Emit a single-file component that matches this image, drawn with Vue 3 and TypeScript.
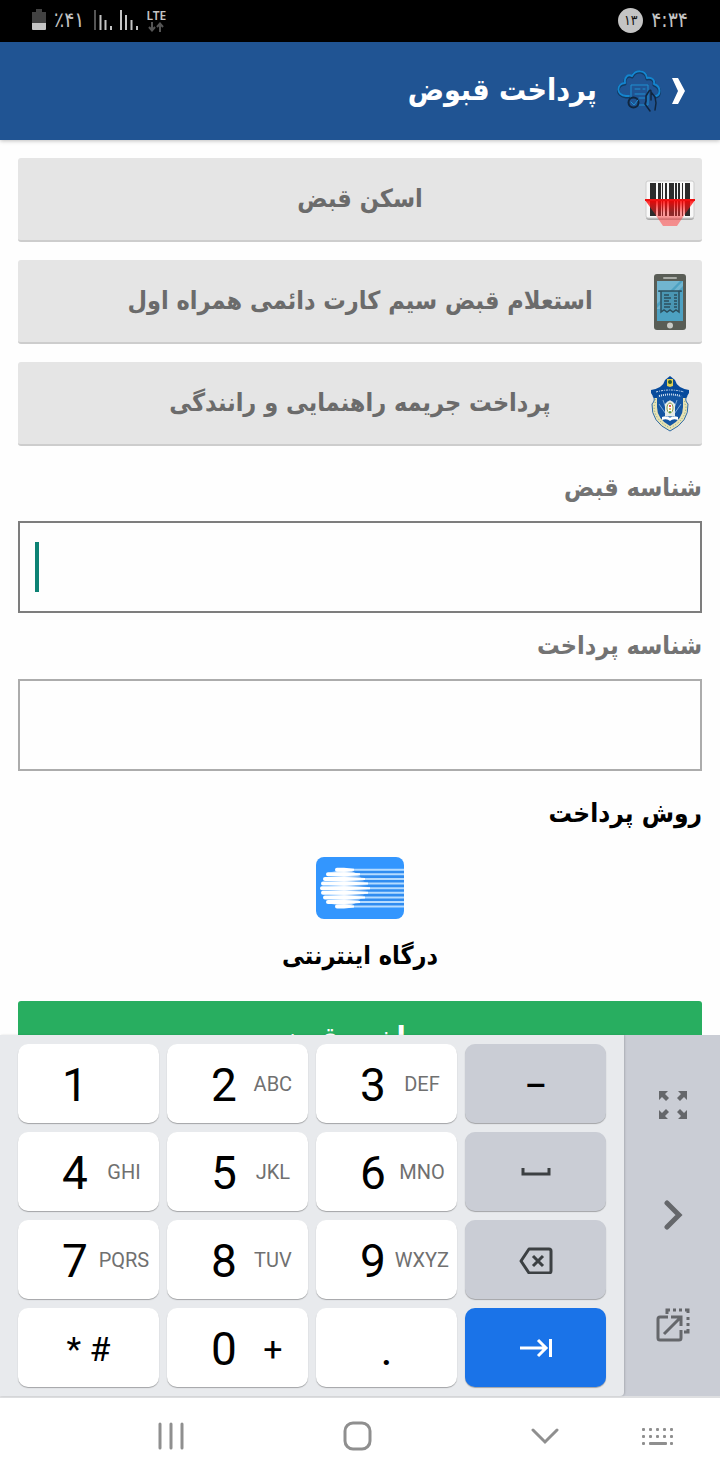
<script setup lang="ts">
import { ref } from 'vue'

interface Key {
  main: string
  sub?: string
}

const billId = ref('')
const paymentId = ref('')

const rows: { keys: Key[]; action: string; label: string }[] = [
  { keys: [{ main: '1' }, { main: '2', sub: 'ABC' }, { main: '3', sub: 'DEF' }], action: 'dash', label: 'Dash' },
  { keys: [{ main: '4', sub: 'GHI' }, { main: '5', sub: 'JKL' }, { main: '6', sub: 'MNO' }], action: 'space', label: 'Space' },
  { keys: [{ main: '7', sub: 'PQRS' }, { main: '8', sub: 'TUV' }, { main: '9', sub: 'WXYZ' }], action: 'delete', label: 'Delete' },
  { keys: [{ main: '* #' }, { main: '0', sub: '+' }, { main: '.' }], action: 'next', label: 'Next' },
]

const keyClass = (k: Key) => ({
  'key-symbols': k.main === '* #',
  'key-dot': k.main === '.',
  'key-plus': k.sub === '+',
})

const cols = [0, 1, 2, 3, 4]
const stripes = [
  { y: 12.7, x: 19, end: 38 },
  { y: 17.3, x: 10, end: 44 },
  { y: 22, x: 7, end: 49 },
  { y: 26.6, x: 5, end: 52 },
  { y: 31.2, x: 4, end: 54 },
  { y: 35.8, x: 5, end: 52 },
  { y: 40.4, x: 7, end: 49 },
  { y: 45, x: 10, end: 44 },
  { y: 49.6, x: 19, end: 38 },
]
</script>

<template>
  <div class="screen" dir="rtl">
    <div class="status" dir="ltr">
      <div class="status-group">
        <svg width="14" height="22" viewBox="0 0 14 22" aria-hidden="true">
          <path d="M4 0h6v3h4v11H0V3h4z" fill="#424242" />
          <path d="M0 14h14v6q0 1-1 1H1q-1 0-1-1z" fill="#c4c4c4" />
        </svg>
        <span class="battery">٪۴۱</span>
        <svg width="46" height="22" viewBox="0 0 46 22" aria-hidden="true">
          <path d="M3 1v20" stroke="#555" stroke-width="2" />
          <path d="M8.500 6v15M13.500 11v10M19 17v4M29 1v20M34 6v15M39.500 11v10M45 17v4" stroke="#c4c4c4" stroke-width="2" />
        </svg>
        <span class="lte">
          <span>LTE</span>
          <svg width="16" height="10" viewBox="0 0 16 10" aria-hidden="true">
            <path d="M4 0v8M1 5l3 3.500L7 5M12 10V2M9 5l3-3.500L15 5" fill="none" stroke="#555" stroke-width="2" />
          </svg>
        </span>
      </div>
      <div class="status-group">
        <span class="count">۱۳</span>
        <span class="clock">۴:۳۴</span>
      </div>
    </div>

    <header class="header">
      <button class="back" type="button" aria-label="بازگشت">
        <svg width="15" height="26" viewBox="0 0 15 26"><path d="M1 0h6l7 13-7 13H1l6-13z" fill="#fff" /></svg>
      </button>
      <svg class="cloud" width="44" height="42" viewBox="0 0 44 42" aria-hidden="true">
        <g fill="none" stroke-linejoin="round" stroke-linecap="round">
          <path d="M12 27H9C-1 26-1 15 8 14 7 8 11 5 15 7 19-1 29 1 30 9c5-1 8 2 7 6 8 3 6 11 2 12" stroke="#123a63" stroke-width="3" />
          <path d="M12 26H9C-1 25-1 14 8 13 7 7 11 4 15 6 19-1 29 0 30 8c5-1 8 2 7 6 8 3 6 11 2 12" stroke="#1485cf" stroke-width="2" />
          <path d="M14 28V15h17v20H22M18 19h5m3 0h2M18 24h10M22 28h6" stroke="#1e90d2" />
          <circle cx="16.500" cy="32.500" r="5" stroke="#10263f" stroke-width="2" />
          <path d="m14 32 3 3 4-5" stroke="#1e90d2" />
          <path d="M29 31v-5l3-5q2-2 2 1v8M34 22l4 5 1 6-1 7M29 31l-1 3 5 7" stroke="#10263f" stroke-width="1.500" />
        </g>
      </svg>
      <h1 class="title">پرداخت قبوض</h1>
    </header>

    <main class="content">
      <div class="actions">
        <button class="action" type="button">
          <svg width="50" height="58" viewBox="0 0 50 58" aria-hidden="true">
            <defs>
              <linearGradient id="beam" x1="0" y1="0" x2="0" y2="1">
                <stop offset="0" stop-color="#f00" stop-opacity=".9" />
                <stop offset=".5" stop-color="#f22" stop-opacity=".45" />
                <stop offset="1" stop-color="#f55" stop-opacity=".6" />
              </linearGradient>
            </defs>
            <rect x="1" y="12" width="48" height="37" rx="3" fill="#aaa" />
            <rect x="1" y="10" width="48" height="37" rx="2" fill="#f8f8f8" stroke="#ccc" />
            <path d="M5 12h6v33H5zM13 12h3v33h-3zM17 12h1v33h-1zM20 12h2v33h-2zM24 12h5v33h-5zM30 12h2v33h-2zM33 12h2v33h-2zM37 12h1v33h-1zM40 12h5v33h-5z" fill="#2b2b2b" />
            <path d="M0 29h50L38 46 32 55H18l-6-9z" fill="url(#beam)" />
            <path d="M0 28h50v2H0z" fill="#e11" />
          </svg>
          <span>اسکن قبض</span>
        </button>
        <button class="action" type="button">
          <svg width="50" height="58" viewBox="0 0 50 58" aria-hidden="true">
            <rect x="9" y="1" width="32" height="56" rx="3" fill="#595d56" />
            <rect x="18" y="4" width="14" height="2" rx="1" fill="#a9aca6" />
            <path d="M12 8h26v40H12z" fill="#4da1c2" />
            <path d="M12 8h23L12 31zM38 8v5L15 36h-3v-1z" fill="#8ac3d9" opacity=".6" />
            <path d="M16 18h18v21l-3-2-3 2-3-2-3 2-3-2-3 2z" fill="#4a96b3" />
            <path d="M14 19v-1h22v1M16 18v21l3-2 3 2 3-2 3 2 3-2 3 2V18" fill="none" stroke="#2c4f5e" stroke-width="1.500" />
            <path d="M19 22h5M19 25h7M19 28h5M19 31h7M19 34h6M29 22h3M29 25h3M29 28h3M29 31h3M29 34h3" stroke="#2c4f5e" stroke-width="1.500" />
            <circle cx="25" cy="52.500" r="3" fill="#c9cbc7" />
          </svg>
          <span>استعلام قبض سیم کارت دائمی همراه اول</span>
        </button>
        <button class="action" type="button">
          <svg width="50" height="58" viewBox="0 0 50 58" aria-hidden="true">
            <path d="M8 21q3 4-1 8-1 18 18 27 19-9 18-27-4-4-1-8z" fill="#e9e2b4" stroke="#2d6aa8" stroke-width="1" />
            <path d="M10 24q1 4-1 7 0 14 16 22 16-8 16-22-2-3-1-7" fill="none" stroke="#6fa07f" stroke-width="1" stroke-dasharray="1 2" />
            <path d="M6 15q12-2 14-10l5-4 5 4q2 8 14 10v3l-3 5H9l-3-5z" fill="#064a9c" />
            <path d="M12 21h26v11q0 12-13 19-13-7-13-19z" fill="#1355a2" />
            <path d="M25 45 14 29m11 16-7-20m7 20 11-16M25 45l7-20M25 45V25" stroke="#7ba7d4" stroke-width="1" />
            <path d="M11 17q14-4 28 0" fill="none" stroke="#cfdff0" stroke-width="1" stroke-dasharray="2 1 1 1" />
            <path d="M14 21q11-3 22 0" fill="none" stroke="#dce9f5" stroke-width="2" stroke-dasharray="1 1" />
            <path d="M22 4h6v7l-3 1-3-1z" fill="#dfce54" />
            <circle cx="25" cy="7" r="2" fill="#28582d" />
            <path d="M20 41V29q5-7 10 0v12z" fill="#e4ebe9" />
            <ellipse cx="25" cy="33" rx="3" ry="5" fill="#fff" stroke="#8d9c3e" />
            <circle cx="25" cy="31" r="1" fill="#d72525" /><circle cx="25" cy="34" r="1" fill="#d9aa23" /><circle cx="25" cy="37" r="1" fill="#278640" />
            <path d="M17 42q5-2 8 1 3-3 8-1v3q-5-2-8 1-3-3-8-1z" fill="#fff" />
          </svg>
          <span>پرداخت جریمه راهنمایی و رانندگی</span>
        </button>
      </div>

      <label class="label" for="bill-id">شناسه قبض</label>
      <div class="field">
        <input id="bill-id" v-model="billId" class="input active" type="text" inputmode="numeric" dir="ltr" />
        <span class="caret" aria-hidden="true"></span>
      </div>
      <label class="label" for="payment-id">شناسه پرداخت</label>
      <div class="field">
        <input id="payment-id" v-model="paymentId" class="input" type="text" inputmode="numeric" dir="ltr" />
      </div>

      <h2 class="heading">روش پرداخت</h2>
      <button class="method" type="button">
        <svg width="88" height="62" viewBox="0 0 88 62" aria-hidden="true">
          <defs>
            <linearGradient id="fade" gradientUnits="userSpaceOnUse" x1="12" y1="0" x2="52" y2="0">
              <stop offset="0" stop-color="#fff" stop-opacity="0" />
              <stop offset=".4" stop-color="#fff" stop-opacity=".85" />
              <stop offset="1" stop-color="#fff" stop-opacity="0" />
            </linearGradient>
          </defs>
          <rect width="88" height="62" rx="8" fill="#3396fe" />
          <path d="M32 14h56v35H32z" fill="#2f86e6" opacity=".6" />
          <path d="M12 16 22 13h12q12 5 18 18-6 13-18 18H22l-10-3z" fill="url(#fade)" />
          <g v-for="s in stripes" :key="s.y">
            <path :d="`M30 ${s.y}H88`" stroke="#b5dbff" stroke-width="2" />
            <path
              :d="`M${s.x + 2} ${s.y - 2}H28L${s.end} ${s.y - 1}V${s.y + 1}L28 ${s.y + 2}H${s.x + 2}A2 2 0 0 1 ${s.x + 2} ${s.y - 2}z`"
              fill="#fff"
            />
          </g>
        </svg>
        <span>درگاه اینترنتی</span>
      </button>
      <button class="pay" type="button">پرداخت قبض</button>
    </main>

    <section class="keyboard" dir="ltr" aria-label="Keypad">
      <div class="keys">
        <template v-for="row in rows" :key="row.action">
          <button v-for="k in row.keys" :key="k.main" class="key" :class="keyClass(k)" type="button">
            <span class="main">{{ k.main }}</span>
            <span v-if="k.sub" class="sub">{{ k.sub }}</span>
          </button>
          <button class="key key-action" :class="{ 'key-next': row.action === 'next' }" type="button" :aria-label="row.label">
            <span v-if="row.action === 'dash'" class="dash">–</span>
            <svg v-else-if="row.action === 'space'" width="34" height="28" viewBox="0 0 34 28">
              <path d="M4 10v6h26v-6" fill="none" stroke="#3c4043" stroke-width="3" />
            </svg>
            <svg v-else-if="row.action === 'delete'" width="34" height="28" viewBox="0 0 34 28">
              <path d="M10 3h20q2 0 2 2v20q0 2-2 2H10L2 15zM14 10l10 10M24 10 14 20" fill="none" stroke="#3c4043" stroke-width="3" stroke-linejoin="round" />
            </svg>
            <svg v-else width="34" height="28" viewBox="0 0 34 28">
              <path d="M1 14h26M19 6l8 8-8 8M31.500 5v18" fill="none" stroke="#fff" stroke-width="3" />
            </svg>
          </button>
        </template>
      </div>
      <div class="side">
        <button type="button" aria-label="Expand">
          <svg width="28" height="28" viewBox="0 0 28 28">
            <path d="M0 0h9L6 3l4 4-3 3-4-4-3 3zM28 0h-9l3 3-4 4 3 3 4-4 3 3zM0 28h9l-3-3 4-4-3-3-4 4-3-3zM28 28h-9l3-3-4-4 3-3 4 4 3-3z" fill="#65676b" />
          </svg>
        </button>
        <button type="button" aria-label="Move right">
          <svg width="20" height="30" viewBox="0 0 20 30">
            <path d="m4 3 12 12L4 27" fill="none" stroke="#65676b" stroke-width="5" stroke-linecap="round" />
          </svg>
        </button>
        <button type="button" aria-label="Floating keyboard">
          <svg width="34" height="34" viewBox="0 0 34 34">
            <path d="M12 9H4q-2 0-2 2v19q0 2 2 2h19q2 0 2-2v-8M15 9h10v9M25 9 8 26" fill="none" stroke="#65676b" stroke-width="3" />
            <path d="M11 6V2h3M17 2h3M23 2h3M29 2h3v3M32 9v3M32 15v3M32 21v3h-4" fill="none" stroke="#65676b" stroke-width="3" />
          </svg>
        </button>
      </div>
    </section>

    <nav class="nav" dir="ltr" aria-label="System">
      <button class="recents" type="button" aria-label="Recents">
        <svg width="26" height="28" viewBox="0 0 26 28"><path d="M2 2v24M13 2v24M24 2v24" stroke="#8f8f8f" stroke-width="3" stroke-linecap="round" /></svg>
      </button>
      <button type="button" aria-label="Home">
        <svg width="30" height="30" viewBox="0 0 30 30"><rect x="2" y="2" width="25" height="26" rx="8" fill="none" stroke="#8f8f8f" stroke-width="3" /></svg>
      </button>
      <button type="button" aria-label="Hide keyboard">
        <svg width="28" height="18" viewBox="0 0 28 18"><path d="m2 3 12 12L26 3" fill="none" stroke="#8f8f8f" stroke-width="3" stroke-linecap="round" /></svg>
      </button>
      <button type="button" aria-label="Switch keyboard">
        <svg width="34" height="20" viewBox="0 0 34 20" fill="#8f8f8f">
          <g v-for="c in cols" :key="c">
            <rect :x="1 + c * 7" y="2" width="3" height="3" rx="1" />
            <rect :x="1 + c * 7" y="9" width="3" height="3" rx="1" />
          </g>
          <rect x="1" y="16" width="3" height="3" rx="1" />
          <rect x="8" y="16" width="18" height="3" rx="1" />
          <rect x="29" y="16" width="3" height="3" rx="1" />
        </svg>
      </button>
    </nav>
  </div>
</template>

<style>
body {
  margin: 0;
  background: #fff;
}
</style>

<style scoped>
* {
  box-sizing: border-box;
}
button {
  margin: 0;
  padding: 0;
  border: 0;
  background: none;
  color: inherit;
  font: inherit;
  cursor: pointer;
}
svg {
  display: block;
  flex: none;
}
.screen {
  display: flex;
  flex-direction: column;
  height: 100vh;
  font-family: "DejaVu Sans Condensed", "DejaVu Sans", sans-serif;
  background: #fefefe;
}
.status {
  display: flex;
  flex: none;
  justify-content: space-between;
  height: 42px;
  padding: 0 32px 2px;
  background: #000;
  color: #c4c4c4;
}
.status-group {
  display: flex;
  align-items: center;
  gap: 8px;
}
.battery,
.clock {
  font-size: 21px;
  line-height: 24px;
}
.lte {
  display: flex;
  flex-direction: column;
  align-items: center;
  font-family: "Noto Sans", sans-serif;
  font-size: 12px;
  font-weight: 600;
  line-height: 13px;
}
.count {
  width: 25px;
  height: 25px;
  border-radius: 50%;
  background: #c4c4c4;
  color: #111;
  font-size: 14px;
  line-height: 24px;
  text-align: center;
}
.header {
  display: flex;
  flex: none;
  align-items: center;
  height: 98px;
  padding: 0 34px;
  background: #205493;
  color: #fff;
  box-shadow: 0 1px 4px rgba(0, 0, 0, 0.25);
  z-index: 1;
}
.back {
  margin-left: 10px;
}
.title {
  margin: 0 20px 0 0;
  padding-bottom: 2px;
  font-size: 30px;
  font-weight: 700;
  line-height: 40px;
}
.content {
  flex: 1;
  min-height: 0;
  padding: 18px 18px 0;
  overflow: hidden;
}
.actions {
  display: grid;
  gap: 18px;
  margin-bottom: 22px;
}
.action {
  display: grid;
  grid-template-columns: 50px 1fr 50px;
  align-items: center;
  height: 84px;
  padding: 0 7px;
  border-bottom: 2px solid #cdcdcd;
  border-radius: 3px;
  background: #e5e5e5;
  color: #6b6b6b;
  font-size: 25px;
  font-weight: 700;
  line-height: 40px;
}
.action svg {
  margin-top: 2px;
}
.label {
  display: block;
  margin-bottom: 13px;
  color: #737373;
  font-size: 25px;
  font-weight: 700;
  line-height: 40px;
}
.field {
  position: relative;
  margin-bottom: 13px;
}
.input {
  display: block;
  width: 100%;
  height: 92px;
  padding: 0 16px;
  border: 2px solid #acacac;
  border-radius: 0;
  outline: 0;
  background: transparent;
  font: 28px "DejaVu Sans", sans-serif;
}
.input.active {
  border-color: #7d7d7d;
}
.caret {
  position: absolute;
  top: 21px;
  bottom: 21px;
  left: 17px;
  width: 4px;
  background: #0d8274;
}
.heading {
  margin: 22px 0 24px;
  color: #000;
  font-size: 26px;
  font-weight: 700;
  line-height: 40px;
}
.method {
  display: flex;
  flex-direction: column;
  align-items: center;
  gap: 17px;
  margin: 0 auto 25px;
  color: #000;
  font-size: 25px;
  font-weight: 700;
  line-height: 40px;
}
.pay {
  display: block;
  width: 100%;
  height: 84px;
  padding-bottom: 12px;
  border-radius: 3px;
  background: #28ae60;
  color: #fff;
  font-size: 30px;
  font-weight: 700;
}
.keyboard {
  display: flex;
  flex: none;
  border-bottom: 2px solid #dedfe1;
  background: #cacdd5;
  font-family: Roboto, sans-serif;
  z-index: 1;
}
.keys {
  display: grid;
  flex: 1;
  grid-template-columns: repeat(4, 1fr);
  gap: 9px 8px;
  padding: 9px 18px;
  border-bottom-right-radius: 4px;
  background: #e8eaed;
  box-shadow: 1px 0 2px rgba(0, 0, 0, 0.15);
}
.key {
  display: flex;
  align-items: center;
  height: 79px;
  padding: 0 8px 0 35px;
  border-radius: 10px;
  background: #fff;
  box-shadow: 0 1px 1px rgba(0, 0, 0, 0.3);
  color: #000;
}
.main {
  width: 44px;
  padding-top: 2px;
  font-size: 46px;
  line-height: 54px;
  text-align: center;
}
.sub {
  flex: 1;
  color: #707070;
  font-size: 20px;
  line-height: 24px;
  text-align: center;
}
.key-symbols,
.key-dot,
.key-action {
  justify-content: center;
  padding: 0;
}
.key-symbols .main {
  width: auto;
  font-size: 34px;
}
.key-plus .sub {
  padding-top: 2px;
  color: #000;
  font-size: 34px;
}
.key-action {
  background: #cacdd5;
}
.key-next {
  background: #1a73e8;
}
.dash {
  padding-top: 2px;
  font-size: 34px;
  font-weight: 500;
  line-height: 40px;
}
.side {
  display: flex;
  flex: none;
  flex-direction: column;
  justify-content: center;
  width: 96px;
  padding: 0 0 2px 2px;
}
.side button {
  display: flex;
  align-items: center;
  justify-content: center;
  height: 110px;
}
.nav {
  display: grid;
  flex: none;
  grid-template-columns: 77fr 187fr 187fr 187fr 40fr 42fr;
  height: 82px;
  padding-bottom: 6px;
  background: #fff;
}
.nav button {
  display: flex;
  align-items: center;
  justify-content: center;
}
.recents {
  grid-column-start: 2;
}
</style>
